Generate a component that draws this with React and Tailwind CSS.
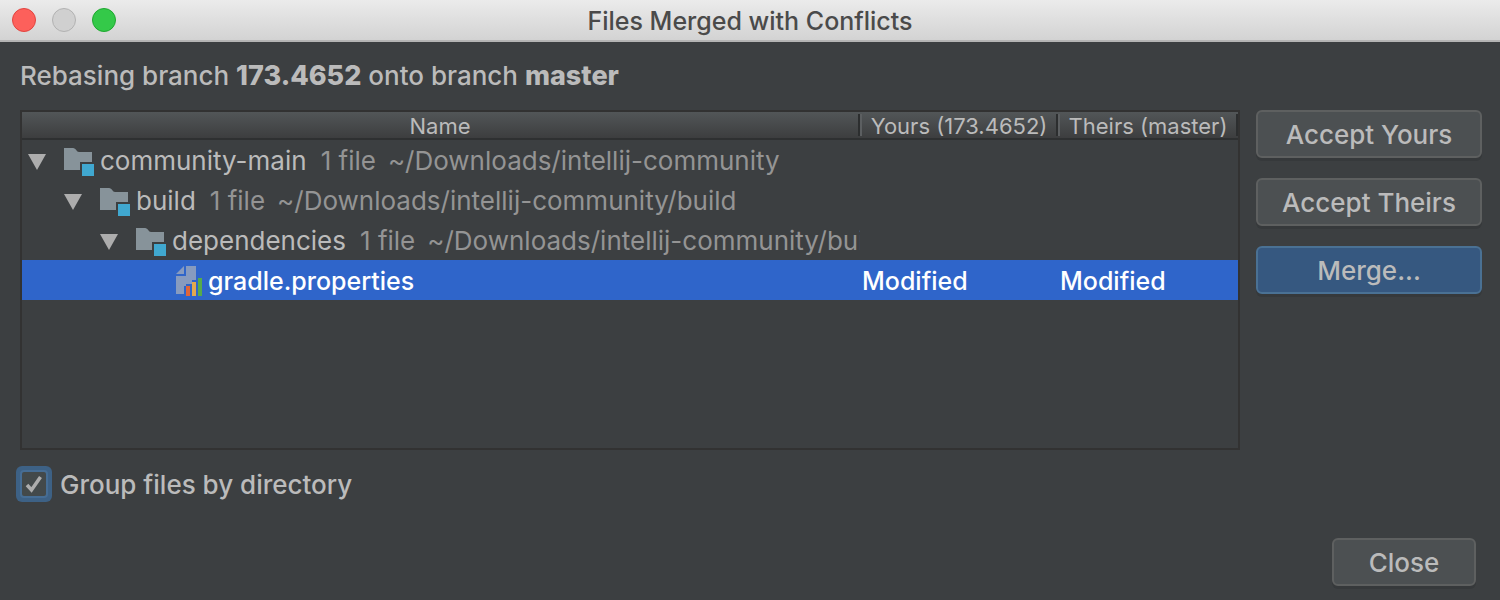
import { useState } from "react";

function FolderIcon() {
  return (
    <svg width="30" height="28" viewBox="0 0 30 28" className="mt-1 shrink-0" aria-hidden="true">
      <path d="M0 0h9c3 0 3.500 4 6 4h13v10H16v8H0z" fill="#87939a" />
      <rect x="18" y="16" width="12" height="12" fill="#40a8d0" />
    </svg>
  );
}

function PropertiesIcon() {
  return (
    <svg width="30" height="30" viewBox="0 0 30 30" className="mt-0.5 shrink-0" aria-hidden="true">
      <path d="M4 8L12 0v8z" fill="#879bbf" />
      <path d="M14 0h10v14h-4v4h-6v2h-2v8H4V10h10z" fill="#879bbf" />
      <rect x="14" y="20" width="4" height="10" fill="#e0663a" />
      <rect x="20" y="16" width="4" height="14" fill="#e3a94e" />
      <rect x="26" y="12" width="4" height="18" fill="#57ab4a" />
    </svg>
  );
}

function FolderRow({ name, path, indent }) {
  return (
    <tr className="h-10">
      <td className="p-0">
        <div className={`flex items-center overflow-hidden whitespace-nowrap ${indent}`}>
          <button type="button" aria-label={`Collapse ${name}`} className="mr-[18px] mt-1 shrink-0">
            <svg width="18" height="16" viewBox="0 0 18 16" className="block" aria-hidden="true">
              <path d="M0 0h18L9 16z" fill="#adadad" />
            </svg>
          </button>
          <FolderIcon />
          <span className="ml-1.5 pt-0.5">{name}</span>
          <span className="ml-3.5 pt-0.5 text-[#949494]">1 file</span>
          <span className="ml-3 pt-0.5 text-[#949494]">{path}</span>
        </div>
      </td>
      <td />
      <td />
    </tr>
  );
}

function DialogButton({ children, primary, className = "" }) {
  return (
    <button
      type="button"
      className={`h-12 rounded-md border-2 pt-0.5 font-medium shadow-[0_3px_0_#36393b] ${
        primary ? "border-[#4a7194] bg-[#365880]" : "border-[#5e6060] bg-[#4c5052]"
      } ${className}`}
    >
      {children}
    </button>
  );
}

function HeaderCell({ children, first, className = "" }) {
  return (
    <th className={`h-7 border-b-2 border-[#2e3031] p-0 font-normal ${className}`}>
      <div className="flex h-[26px] items-center">
        {!first && <span className="h-[22px] w-0.5 bg-[#5c5f61]" />}
        <span className="flex-1 whitespace-nowrap pt-0.5 text-center">{children}</span>
        <span className="h-[22px] w-0.5 bg-[#2c2e2f]" />
      </div>
    </th>
  );
}

export default function App() {
  const [grouped, setGrouped] = useState(true);
  return (
    <div className="flex min-h-screen flex-col bg-[#3c3f41] font-['Inter',sans-serif] text-[26px] leading-8 text-[#bbbbbb]">
      <header className="grid h-[42px] grid-cols-[1fr_auto_1fr] items-center border-b-2 border-[#b4b4b4] bg-linear-to-b from-[#ebebeb] to-[#d3d3d3] px-3">
        <div className="flex gap-4">
          <button type="button" aria-label="Close window" className="size-6 rounded-full border border-[#e2443f] bg-[#fd605b]" />
          <button type="button" aria-label="Minimize window" className="size-6 rounded-full border border-[#b2b2b2] bg-[#d0d0d0]" />
          <button type="button" aria-label="Zoom window" className="size-6 rounded-full border border-[#1fa830] bg-[#34c949]" />
        </div>
        <h1 className="pt-0.5 text-[25px] font-medium text-[#4a4a4a]">Files Merged with Conflicts</h1>
      </header>

      <main className="flex flex-1 flex-col pt-4">
        <p className="px-5 font-medium leading-9">
          Rebasing branch <b className="text-[27px] font-extrabold">173.4652</b> onto branch{" "}
          <b className="text-[27px] font-extrabold">master</b>
        </p>
        <div className="mt-4 flex flex-1 gap-4 pl-5 pr-[18px]">
          <div className="min-w-0 flex-1 border-2 border-[#323232]">
            <table className="w-full table-fixed border-separate border-spacing-0">
              <thead>
                <tr className="bg-linear-to-b from-[#525658] to-[#3b3c3d] text-[22px]">
                  <HeaderCell first>Name</HeaderCell>
                  <HeaderCell className="w-[198px]">Yours (173.4652)</HeaderCell>
                  <HeaderCell className="w-[180px]">Theirs (master)</HeaderCell>
                </tr>
              </thead>
              <tbody>
                <FolderRow name="community-main" path="~/Downloads/intellij-community" indent="pl-1.5" />
                <FolderRow name="build" path="~/Downloads/intellij-community/build" indent="pl-[42px]" />
                <FolderRow name="dependencies" path="~/Downloads/intellij-community/build/dependencies" indent="pl-[78px]" />
                <tr className="h-10 bg-[#2f65ca] text-[25px] font-medium text-white">
                  <td className="p-0">
                    <div className="flex items-center pl-[150px]">
                      <PropertiesIcon />
                      <span className="ml-1.5 pt-0.5">gradle.properties</span>
                    </div>
                  </td>
                  <td className="p-0 pl-0.5 pt-0.5">Modified</td>
                  <td className="p-0 pl-0.5 pt-0.5">Modified</td>
                </tr>
              </tbody>
            </table>
          </div>
          <div className="flex w-[226px] flex-col gap-5">
            <DialogButton>Accept Yours</DialogButton>
            <DialogButton>Accept Theirs</DialogButton>
            <DialogButton primary>Merge...</DialogButton>
          </div>
        </div>

        <label className="mt-4 flex items-center gap-2 self-start pl-4 font-medium">
          <span className="grid size-9 place-items-center rounded-md bg-[#3d6185]">
            <input
              type="checkbox"
              checked={grouped}
              onChange={(e) => setGrouped(e.target.checked)}
              className="peer col-start-1 row-start-1 size-7 appearance-none rounded-sm border-2 border-[#466d94] bg-[#43494a] outline-none"
            />
            <svg width="18" height="18" viewBox="0 0 18 18" className="pointer-events-none invisible col-start-1 row-start-1 peer-checked:visible" aria-hidden="true">
              <path d="M2 10l4.500 5L15.500 2" fill="none" stroke="#adadad" strokeWidth="3.500" />
            </svg>
          </span>
          <span className="pt-0.5">Group files by directory</span>
        </label>

        <div className="mt-9 flex justify-end pb-3.5 pr-6">
          <DialogButton className="w-36">Close</DialogButton>
        </div>
      </main>
    </div>
  );
}
